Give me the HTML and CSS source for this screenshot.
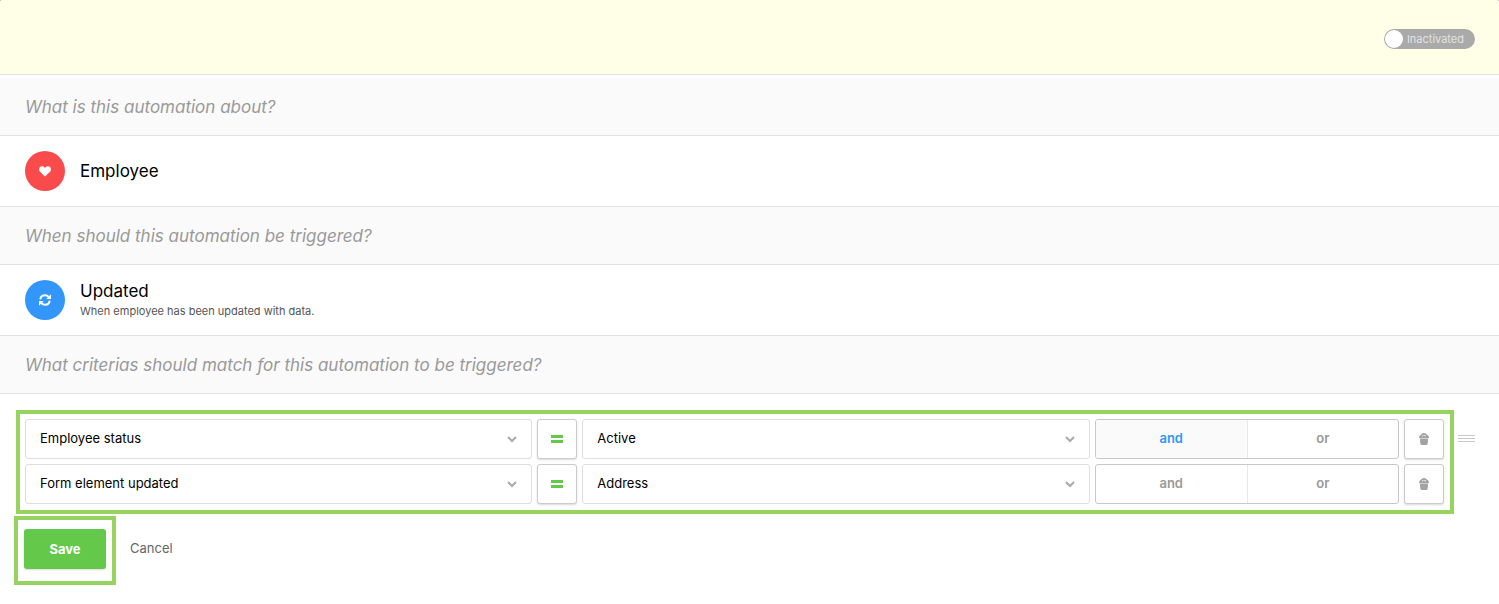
FILE: index.html
```html
<!DOCTYPE html>
<html lang="en">
<head>
    <meta charset="UTF-8">
    <meta name="viewport" content="width=device-width, initial-scale=1.0">
    <title>Automation</title>
    <link rel="stylesheet" href="styles.css">
</head>
<body>
    <header class="topbar">
        <label class="switch">
            <input type="checkbox" role="switch">
            <span>Inactivated</span>
        </label>
    </header>

    <main>
        <h2 class="question">What is this automation about?</h2>
        <div class="answer">
            <span class="icon icon-red">
                <svg width="12" height="11" viewBox="0 0 12 11"><path fill="#fff" d="M6 10.6 1 5.7C-.3 4.400-.2 2.200 1 1.100 2.400-.2 4.800 0 6 2 7.200 0 9.600-.2 11 1.100c1.200 1.100 1.300 3.300 0 4.600z"/></svg>
            </span>
            <div class="answer-title">Employee</div>
        </div>

        <h2 class="question">When should this automation be triggered?</h2>
        <div class="answer">
            <span class="icon icon-blue">
                <svg width="12" height="12" viewBox="0 0 12 12">
                    <path fill="none" stroke="#fff" stroke-width="2" d="M1.300 5.300C1.600 2.800 3.600 1.200 6 1.200c1.500 0 2.700.6 3.600 1.700M10.700 6.700c-.3 2.500-2.300 4.100-4.700 4.100-1.500 0-2.700-.6-3.600-1.700"/>
                    <path fill="#fff" d="M12 .3V5H7.300zM0 11.700V7h4.700z"/>
                </svg>
            </span>
            <div class="answer-body">
                <div class="answer-title">Updated</div>
                <div class="answer-text">When employee has been updated with data.</div>
            </div>
        </div>

        <h2 class="question">What criterias should match for this automation to be triggered?</h2>
        <form>
            <div class="criterias">
                <div class="criteria-list">
                    <div class="criteria">
                        <div class="select">
                            <select aria-label="Field"><option>Employee status</option></select>
                            <svg width="10" height="7" viewBox="0 0 10 7"><path d="M1 1l4 4 4-4"/></svg>
                        </div>
                        <button type="button" class="square equals" aria-label="Equals">
                            <svg width="12" height="8" viewBox="0 0 12 8"><path fill="#64c84b" d="M0 0h12v3H0zM0 5h12v3H0z"/></svg>
                        </button>
                        <div class="select">
                            <select aria-label="Value"><option>Active</option></select>
                            <svg width="10" height="7" viewBox="0 0 10 7"><path d="M1 1l4 4 4-4"/></svg>
                        </div>
                        <div class="segment">
                            <label><input type="radio" name="join1" checked><span>and</span></label>
                            <label><input type="radio" name="join1"><span>or</span></label>
                        </div>
                        <button type="button" class="square" aria-label="Remove">
                            <svg width="10" height="12" viewBox="0 0 10 12">
                                <path fill="#a3a3a3" d="M.8 5.600h8.400l-.6 5.200c-.1.700-.6 1.200-1.300 1.200H2.700c-.7 0-1.200-.5-1.300-1.200z"/>
                                <path fill="#a3a3a3" fill-rule="evenodd" d="M0 4.900C0 3.400.7 2.300 2 1.800 2.500.7 3.600 0 5 0s2.500.7 3 1.800c1.300.5 2 1.600 2 3.100zM3 3.200h1l.6-1.100H3.700zM5.500 3.200H7l-.6-1.300h-1z"/>
                            </svg>
                        </button>
                    </div>
                    <div class="criteria">
                        <div class="select">
                            <select aria-label="Field"><option>Form element updated</option></select>
                            <svg width="10" height="7" viewBox="0 0 10 7"><path d="M1 1l4 4 4-4"/></svg>
                        </div>
                        <button type="button" class="square equals" aria-label="Equals">
                            <svg width="12" height="8" viewBox="0 0 12 8"><path fill="#64c84b" d="M0 0h12v3H0zM0 5h12v3H0z"/></svg>
                        </button>
                        <div class="select">
                            <select aria-label="Value"><option>Address</option></select>
                            <svg width="10" height="7" viewBox="0 0 10 7"><path d="M1 1l4 4 4-4"/></svg>
                        </div>
                        <div class="segment">
                            <label><input type="radio" name="join2"><span>and</span></label>
                            <label><input type="radio" name="join2"><span>or</span></label>
                        </div>
                        <button type="button" class="square" aria-label="Remove">
                            <svg width="10" height="12" viewBox="0 0 10 12">
                                <path fill="#a3a3a3" d="M.8 5.600h8.400l-.6 5.200c-.1.700-.6 1.200-1.300 1.200H2.700c-.7 0-1.200-.5-1.300-1.200z"/>
                                <path fill="#a3a3a3" fill-rule="evenodd" d="M0 4.900C0 3.400.7 2.300 2 1.800 2.500.7 3.600 0 5 0s2.500.7 3 1.800c1.300.5 2 1.600 2 3.100zM3 3.200h1l.6-1.100H3.700zM5.500 3.200H7l-.6-1.300h-1z"/>
                            </svg>
                        </button>
                    </div>
                </div>
                <button type="button" class="handle" aria-label="Move">
                    <svg width="17" height="7" viewBox="0 0 17 7"><path fill="#c8c8c8" d="M0 0h17v1H0zM0 3h17v1H0zM0 6h17v1H0z"/></svg>
                </button>
            </div>
            <div class="actions">
                <div class="save-box">
                    <button type="submit" class="save">Save</button>
                </div>
                <a href="#" class="cancel">Cancel</a>
            </div>
        </form>
    </main>
</body>
</html>
```

FILE: styles.css
```css
* {
    box-sizing: border-box;
}
html {
    background: #999;
}
body {
    margin: 0;
    min-height: 100vh;
    background: #fff;
    border-radius: 2px 2px 0 0;
    font-family: Inter, "Liberation Sans", sans-serif;
    font-size: 13px;
    line-height: 20px;
    color: #000;
}
button, select {
    font: inherit;
}
svg {
    display: block;
}

/* top bar */
.topbar {
    display: flex;
    justify-content: flex-end;
    align-items: center;
    height: 75px;
    padding: 4px 24px 0;
    margin-bottom: 3px;
    background: #ffffe8;
    border-bottom: 1px solid #e2e2e2;
    border-radius: 2px 2px 0 0;
}
.switch {
    display: flex;
    align-items: center;
    gap: 4px;
    height: 20px;
    padding: 0 11px 0 1px;
    border-radius: 10px;
    background: #aaa;
    color: #e2e2e2;
    font-size: 11px;
    cursor: pointer;
}
.switch input {
    appearance: none;
    width: 18px;
    height: 18px;
    margin: 0;
    border-radius: 50%;
    background: #fff;
}

/* questions and answers */
.question {
    margin: 0;
    padding: 17px 25px 16px;
    background: #fafafa;
    border-bottom: 1px solid #e2e2e2;
    color: #999;
    font-size: 17px;
    font-weight: 400;
    font-style: italic;
    line-height: 24px;
}
.answer {
    display: flex;
    align-items: center;
    gap: 15px;
    height: 71px;
    padding: 0 25px;
    border-bottom: 1px solid #e2e2e2;
}
.icon {
    display: flex;
    align-items: center;
    justify-content: center;
    width: 40px;
    height: 40px;
    border-radius: 50%;
}
.icon-red {
    background: #f94b4b;
}
.icon-blue {
    background: #3296fa;
}
.answer-body {
    padding-bottom: 2px;
}
.answer-title {
    font-size: 17px;
    line-height: 24px;
}
.answer-text {
    color: #555;
    font-size: 11px;
    line-height: 16px;
}

/* criterias */
.criterias {
    display: flex;
    align-items: flex-start;
    gap: 4px;
    padding: 16px 24px 0 16px;
}
.criteria-list {
    flex: 1;
    display: grid;
    gap: 5px;
    padding: 5px 6px 6px 5px;
    border: 4px solid #96d35f;
}
.criteria {
    display: grid;
    grid-template-columns: 5fr 40px 5fr 3fr 40px;
    gap: 5px;
    height: 40px;
}
.select {
    display: grid;
    align-items: center;
}
.select select, .select svg {
    grid-area: 1 / 1;
}
.select select {
    appearance: none;
    width: 100%;
    height: 40px;
    padding: 0 30px 2px 14px;
    border: 1px solid #dedede;
    border-radius: 3px;
    background: #fff;
    color: #000;
}
.select svg {
    justify-self: end;
    margin-right: 15px;
    fill: none;
    stroke: #aaa;
    stroke-width: 2;
    pointer-events: none;
}
.square {
    display: flex;
    align-items: center;
    justify-content: center;
    padding: 0;
    border: 1px solid #ccc;
    border-radius: 3px;
    background: #fff;
    box-shadow: 0 1px 2px rgba(0,0,0,0.15);
    cursor: pointer;
}
.segment {
    display: grid;
    grid-template-columns: 1fr 1fr;
    border: 1px solid #c8c8c8;
    border-radius: 3px;
    overflow: hidden;
}
.segment label {
    display: flex;
    cursor: pointer;
}
.segment label + label {
    border-left: 1px solid #e8e8e8;
}
.segment input {
    appearance: none;
    width: 0;
    margin: 0;
}
.segment span {
    flex: 1;
    padding-top: 8px;
    text-align: center;
    color: #999;
    font-weight: 600;
}
.segment input:checked + span {
    background: #fafafa;
    color: #3296fa;
}
.handle {
    display: flex;
    align-items: center;
    height: 40px;
    margin-top: 8px;
    padding: 0;
    border: none;
    background: none;
    cursor: move;
}

/* actions */
.actions {
    display: flex;
    align-items: center;
    gap: 14px;
    padding: 2px 14px;
}
.save-box {
    padding: 9px 6px 12px;
    border: 4px solid #96d35f;
}
.save {
    display: block;
    width: 82px;
    height: 40px;
    padding: 0;
    border: none;
    border-radius: 3px;
    background: #64c84b;
    box-shadow: 0 1px 2px rgba(0,0,0,0.15);
    color: #fff;
    font-weight: 700;
    cursor: pointer;
}
.cancel {
    padding-bottom: 5px;
    color: #666;
    text-decoration: none;
}
```
